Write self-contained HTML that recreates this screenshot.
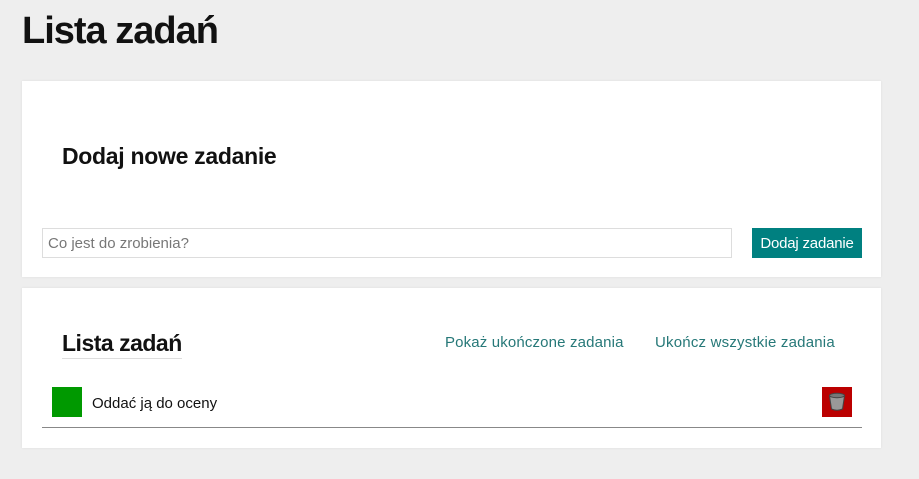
<!DOCTYPE html>
<html><head><meta charset="utf-8"><style>
body{margin:0;width:919px;height:479px;background:#eeeeee;font-family:"Liberation Sans",sans-serif;position:relative;overflow:hidden}
.a{position:absolute;white-space:nowrap}
.card{position:absolute;left:22px;width:859px;background:#fff;box-shadow:0 0 2px #ddd}
</style></head><body>
<div class="a" style="left:22px;top:10px;font-size:38px;font-weight:bold;color:#111;letter-spacing:-1px">Lista zadań</div>
<div class="card" style="top:81px;height:196px"></div>
<div class="a" style="left:62px;top:143px;font-size:23px;font-weight:bold;color:#111;letter-spacing:-0.3px">Dodaj nowe zadanie</div>
<div class="a" style="left:42px;top:228px;width:688px;height:28px;border:1px solid #ddd;background:#fff"></div>
<div class="a" style="left:48px;top:235px;font-size:15px;color:#777">Co jest do zrobienia?</div>
<div class="a" style="left:752px;top:228px;width:110px;height:30px;background:#008080;color:#fff;font-size:15px;line-height:31px;text-align:center;letter-spacing:-0.2px">Dodaj zadanie</div>
<div class="card" style="top:288px;height:160px"></div>
<div class="a" style="left:62px;top:330px;font-size:23px;font-weight:bold;color:#111;letter-spacing:-0.5px;border-bottom:1px solid #ddd;padding-bottom:1px">Lista zadań</div>
<div class="a" style="left:445px;top:334px;font-size:15px;color:#267878;letter-spacing:0.15px">Pokaż ukończone zadania</div>
<div class="a" style="left:655px;top:334px;font-size:15px;color:#267878;letter-spacing:0.2px">Ukończ wszystkie zadania</div>
<div class="a" style="left:52px;top:387px;width:30px;height:30px;background:#009900"></div>
<div class="a" style="left:92px;top:395px;font-size:15px;color:#111">Oddać ją do oceny</div>
<div class="a" style="left:822px;top:387px;width:30px;height:30px;background:#bb0000">
<svg width="30" height="30" viewBox="0 0 30 30"><path d="M7.5 9 L9.5 22 Q15 24.5 20.5 22 L22.5 9Z" fill="#999" stroke="#444" stroke-width="1"/><ellipse cx="15" cy="8.5" rx="7.5" ry="2.2" fill="#777" stroke="#444" stroke-width="1"/></svg></div>
<div class="a" style="left:42px;top:427px;width:820px;height:1px;background:#888"></div>
</body></html>
